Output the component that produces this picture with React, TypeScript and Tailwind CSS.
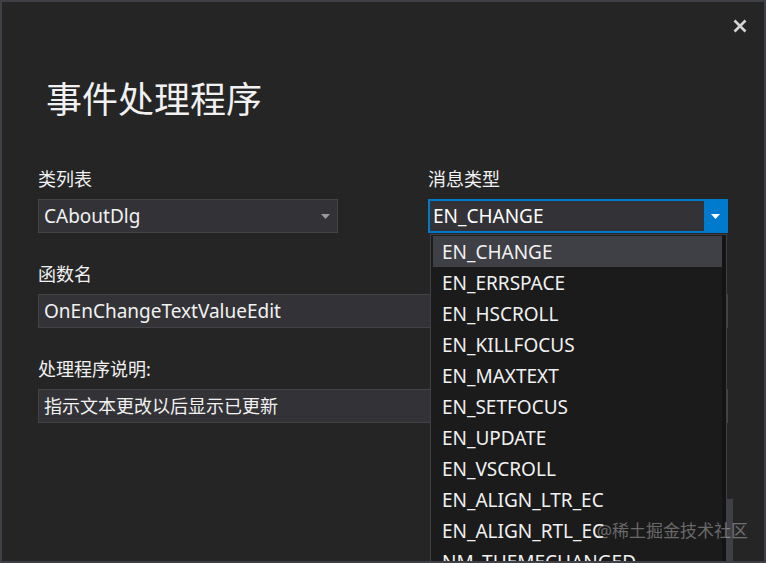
import React from "react";

const FONT = { fontFamily: '"Noto Sans", "Noto Sans CJK SC", sans-serif' };

const messages = [
  "EN_CHANGE",
  "EN_ERRSPACE",
  "EN_HSCROLL",
  "EN_KILLFOCUS",
  "EN_MAXTEXT",
  "EN_SETFOCUS",
  "EN_UPDATE",
  "EN_VSCROLL",
  "EN_ALIGN_LTR_EC",
  "EN_ALIGN_RTL_EC",
  "NM_THEMECHANGED",
];

const Label: React.FC<{ children: React.ReactNode }> = ({ children }) => (
  <div className="text-[18px] leading-[24px] text-[#f1f1f1]">{children}</div>
);

export default function App() {
  return (
    <div
      style={FONT}
      className="relative w-[766px] h-[563px] overflow-hidden bg-[#252526] border-2 border-[#3f3f46] flex flex-col"
    >
      {/* Close */}
      <div className="flex justify-end pt-[17px] pr-[17px]">
        <svg width="14" height="14" viewBox="0 0 14 14">
          <path d="M1.5 1.5 L12.5 12.5 M12.5 1.5 L1.5 12.5" stroke="#d4d4d4" strokeWidth="2.6" />
        </svg>
      </div>

      {/* Title */}
      <h1 className="mt-[49px] pl-[44px] text-[36px] leading-[36px] text-[#f1f1f1]">事件处理程序</h1>

      <div className="mt-[49px] px-[36px] flex flex-col">
        {/* Row 1 */}
        <div className="flex gap-[90px]">
          <div className="w-[300px] flex flex-col gap-[8px]">
            <Label>类列表</Label>
            <div className="h-[34px] flex items-center justify-between bg-[#333337] border border-[#434346] pl-[5px] pr-[7px]">
              <span className="text-[19px] text-[#f1f1f1]">CAboutDlg</span>
              <svg width="9" height="5" viewBox="0 0 9 5">
                <path d="M0 0 H9 L4.5 5 Z" fill="#999999" />
              </svg>
            </div>
          </div>
          <div className="w-[300px] flex flex-col gap-[8px]">
            <Label>消息类型</Label>
            <div className="relative">
              <div className="h-[34px] flex bg-[#007acc] p-[2px]">
                <div className="flex-1 flex items-center bg-[#333337] pl-[3px]">
                  <span className="text-[19px] text-[#ffffff]">EN_CHANGE</span>
                </div>
                <div className="w-[22px] flex items-center justify-center">
                  <svg width="9" height="5" viewBox="0 0 9 5">
                    <path d="M0 0 H9 L4.5 5 Z" fill="#ffffff" />
                  </svg>
                </div>
              </div>

              {/* Dropdown list */}
              <div className="absolute z-10 left-[2px] top-[35px] w-[297px] h-[340px] bg-[#1b1b1c] border border-[#3f3f46] flex">
                <div className="flex-1 flex flex-col pl-[2px] pt-[1px]">
                  {messages.map((m, i) => (
                    <div
                      key={m}
                      className={
                        "h-[31px] shrink-0 flex items-center pl-[9px] pt-[2px] text-[19px] text-[#f1f1f1] " +
                        (i === 0 ? "bg-[#3f3f46]" : "")
                      }
                    >
                      {m}
                    </div>
                  ))}
                </div>
                <div className="w-[4px] bg-[#141415]" />
              </div>
            </div>
          </div>
        </div>

        {/* Row 2 */}
        <div className="mt-[29px] flex flex-col gap-[8px]">
          <Label>函数名</Label>
          <div className="h-[34px] flex items-center bg-[#333337] border border-[#434346] pl-[5px]">
            <span className="text-[19px] text-[#f1f1f1]">OnEnChangeTextValueEdit</span>
          </div>
        </div>

        {/* Row 3 */}
        <div className="mt-[29px] flex flex-col gap-[8px]">
          <Label>处理程序说明:</Label>
          <div className="h-[34px] flex items-center bg-[#333337] border border-[#434346] pl-[5px]">
            <span className="text-[18px] text-[#f1f1f1]">指示文本更改以后显示已更新</span>
          </div>
        </div>
      </div>

      {/* Footer button (mostly hidden by dropdown) */}
      <div className="mt-auto flex justify-end pr-[31px]">
        <div className="w-[106px] h-[62px] bg-[#3f3f46] border-l border-[#2d2d30]" />
      </div>

      {/* Watermark */}
      <div className="absolute z-20 right-[16px] bottom-[20px] text-[17px] leading-[20px] text-[#ffffff]/35">
        @稀土掘金技术社区
      </div>
    </div>
  );
}
